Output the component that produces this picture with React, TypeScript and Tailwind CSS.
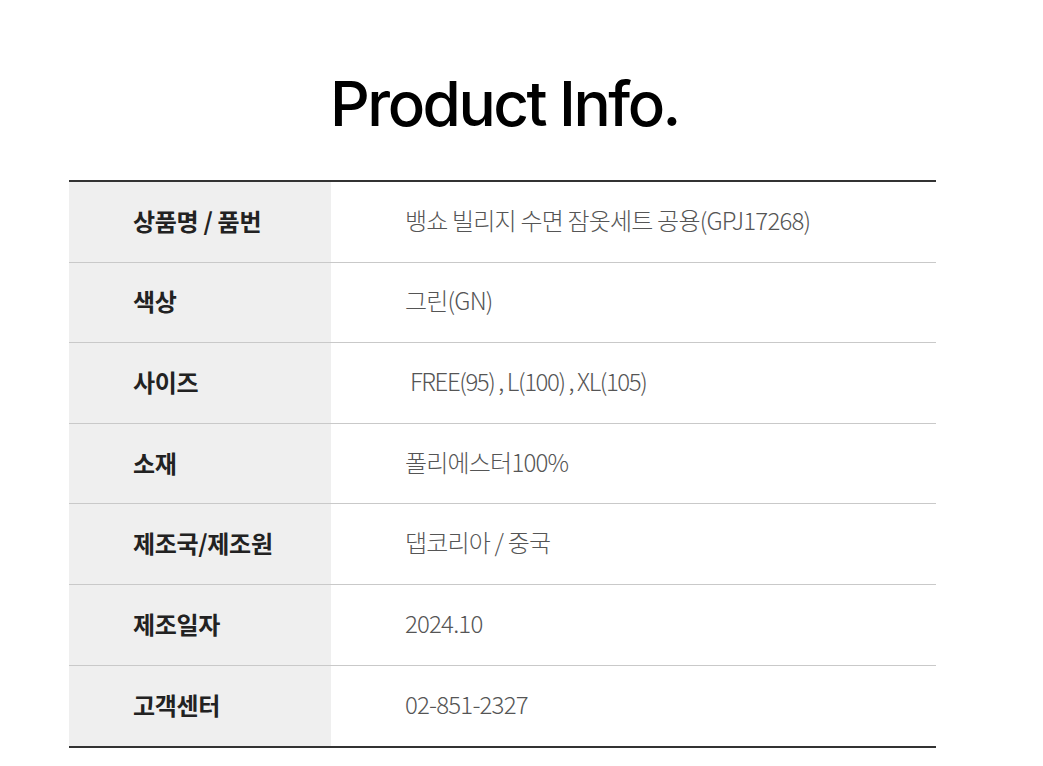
const rows = [
  { label: "상품명 / 품번", value: "뱅쇼 빌리지 수면 잠옷세트 공용(GPJ17268)" },
  { label: "색상", value: "그린(GN)" },
  { label: "사이즈", value: "FREE(95) , L(100) , XL(105)", indent: true },
  { label: "소재", value: "폴리에스터100%" },
  { label: "제조국/제조원", value: "댑코리아 / 중국" },
  { label: "제조일자", value: "2024.10" },
  { label: "고객센터", value: "02-851-2327" },
];

export default function App() {
  return (
    <div className="w-[1043px] h-[766px] bg-white overflow-hidden">
      <h1
        className="pt-[73px] h-[180px] text-center text-[62px] font-medium tracking-[-2.5px] text-black leading-none"
        style={{ fontFamily: "Inter, 'Noto Sans', sans-serif" }}
      >
        <span className="inline-block pr-[34px]">Product Info.</span>
      </h1>
      <div
        className="ml-[69px] w-[867px] border-t-2 border-b-2 border-[#333]"
        style={{ fontFamily: "'Noto Sans CJK KR', 'Noto Sans', sans-serif" }}
      >
        {rows.map((r, i) => (
          <div
            key={r.label}
            className={`flex h-[80.6px] ${i < rows.length - 1 ? "border-b border-[#c9c9c9]" : ""}`}
          >
            <div className="w-[262px] shrink-0 bg-[#efefef] flex items-center pl-[64px] pb-[2px] text-[24px] font-bold text-[#222] tracking-[-0.3px]">
              {r.label}
            </div>
            <div
              className={`flex items-center pb-[4px] ${r.indent ? "pl-[79px] tracking-[-1.4px]" : "pl-[74px] tracking-[-0.8px]"} text-[24px] font-light text-[#555]`}
            >
              {r.value}
            </div>
          </div>
        ))}
      </div>
    </div>
  );
}
